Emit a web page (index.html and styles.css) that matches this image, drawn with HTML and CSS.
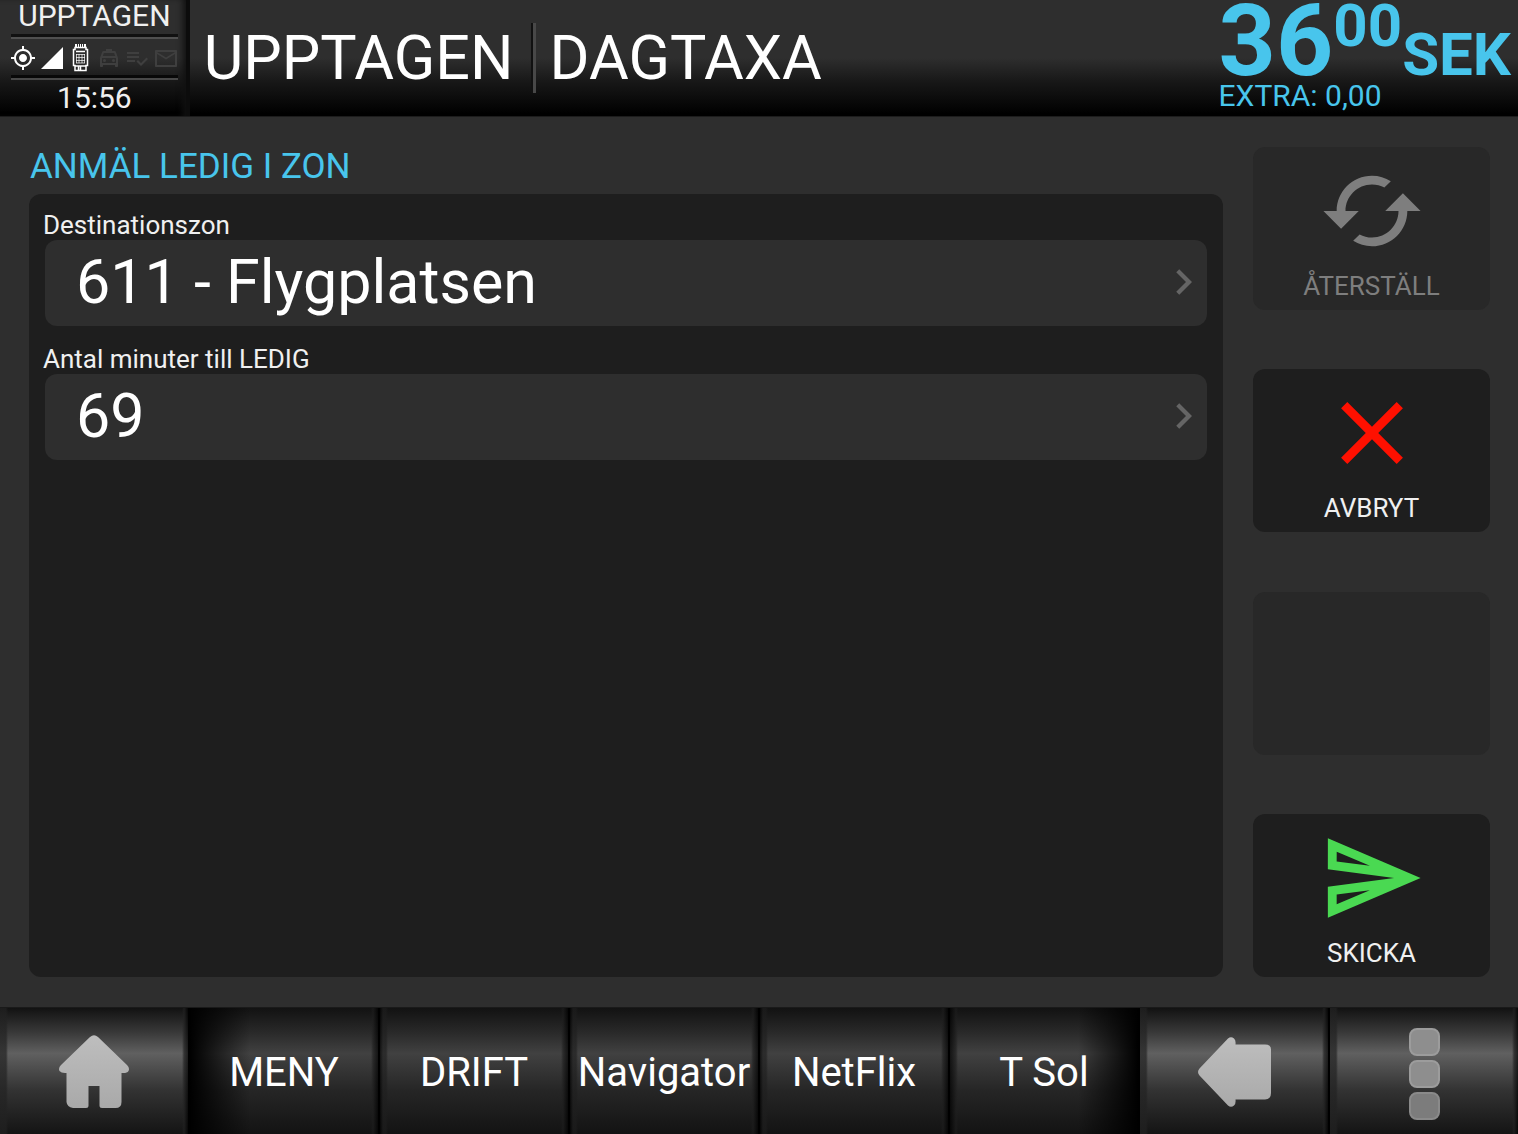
FILE: index.html
```html
<!DOCTYPE html>
<html lang="sv">
<head>
<meta charset="utf-8">
<title>Anmäl ledig i zon</title>
<link rel="stylesheet" href="styles.css">
</head>

<body>
<header class="top">
	<div class="status">
		<div class="status-text">UPPTAGEN</div>
		<div class="status-icons">
			<svg viewBox="0 0 24 24"><path d="M12 8c-2.21 0-4 1.79-4 4s1.79 4 4 4 4-1.79 4-4-1.79-4-4-4zm8.94 3c-.46-4.17-3.77-7.48-7.94-7.94V0h-2v3.06C6.83 3.52 3.52 6.83 3.06 11H0v2h3.06c.46 4.17 3.77 7.48 7.94 7.94V24h2v-3.06c4.17-.46 7.48-3.77 7.94-7.94H24v-2h-3.06zM12 19c-3.87 0-7-3.13-7-7s3.13-7 7-7 7 3.13 7 7-3.13 7-7 7z"/></svg>
			<svg viewBox="0 0 24 24"><path d="M1 23h22V1z"/></svg>
			<svg class="meter" viewBox="0 0 24 28"><path d="M7 0h2v3H7zM10 0h1v3h-1zM12 0h1v3h-1zM14 0h1v3h-1zM16 0h2v3h-2z"/><path class="line" d="M7 3.500h11v2h1.500v16H18v5H7v-5H5.500v-16H7zM8 7.500h9M7 22h11M10.500 22v4M12.500 22v4"/><path class="thin" d="M8 10.500h9M8 13.500h9M8 16.500h9M8 19h9M8.500 10v9M11 10v9M14 10v9M16.500 10v9"/></svg>
			<svg class="off" viewBox="0 0 24 24"><path d="M18.920 6.010C18.720 5.420 18.160 5 17.500 5H15V3H9v2H6.500c-.66 0-1.210.42-1.420 1.010L3 12v8c0 .55.45 1 1 1h1c.55 0 1-.45 1-1v-1h12v1c0 .55.45 1 1 1h1c.55 0 1-.45 1-1v-8l-2.080-5.990zM6.850 7h10.290l1.040 3H5.810l1.040-3zM19 17H5v-5h14v5z"/><circle cx="7.500" cy="14.500" r="1.500"/><circle cx="16.500" cy="14.500" r="1.500"/></svg>
			<svg class="off" viewBox="0 0 24 24"><path d="M14 10H2v2h12v-2zm0-4H2v2h12V6zM2 16h8v-2H2v2zm19.500-4.500L23 13l-6.990 7-4.510-4.500L13 14l3.010 3 5.490-5.500z"/></svg>
			<svg class="off" viewBox="0 0 24 24"><path d="M22 4H2c-.6 0-1 .4-1 1v15c0 .6.4 1 1 1h20c.6 0 1-.4 1-1V5c0-.6-.4-1-1-1zm-1 15H3V8l9 5.500L21 8v11zm-9-7.500L3 6h18l-9 5.500z"/></svg>
		</div>
		<div class="status-text">15:56</div>
	</div>
	<div class="mode">
		<span>UPPTAGEN</span>
		<span>DAGTAXA</span>
	</div>
	<div class="fare">
		<div class="price"><b class="whole">36</b><b class="cents">00</b><b class="currency">SEK</b></div>
		<div class="extra">EXTRA: 0,00</div>
	</div>
</header>

<main class="content">
	<section class="form">
		<h1>ANMÄL LEDIG I ZON</h1>
		<div class="panel">
			<div class="row">
				<label for="zone">Destinationszon</label>
				<button type="button" class="field" id="zone">611 - Flygplatsen
					<svg viewBox="8 6 8 12"><path d="M10 6L8.590 7.410 13.170 12l-4.580 4.590L10 18l6-6z"/></svg>
				</button>
			</div>
			<div class="row">
				<label for="minutes">Antal minuter till LEDIG</label>
				<button type="button" class="field" id="minutes">69
					<svg viewBox="8 6 8 12"><path d="M10 6L8.590 7.410 13.170 12l-4.580 4.590L10 18l6-6z"/></svg>
				</button>
			</div>
		</div>
	</section>
	<aside class="actions">
		<button type="button" class="action reset" disabled>
			<svg viewBox="0 0 24 24"><path d="M19 8l-4 4h3c0 3.310-2.690 6-6 6-1.010 0-1.970-.25-2.800-.7l-1.460 1.460C8.970 19.540 10.430 20 12 20c4.420 0 8-3.580 8-8h3l-4-4zM6 12c0-3.310 2.690-6 6-6 1.010 0 1.970.25 2.800.7l1.460-1.460C15.030 4.460 13.570 4 12 4c-4.420 0-8 3.580-8 8H1l4 4 4-4H6z"/></svg>
			ÅTERSTÄLL
		</button>
		<button type="button" class="action cancel">
			<svg viewBox="0 0 24 24"><path d="M19 6.410L17.590 5 12 10.590 6.410 5 5 6.410 10.590 12 5 17.590 6.410 19 12 13.410 17.590 19 19 17.590 13.410 12z"/></svg>
			AVBRYT
		</button>
		<div class="action empty"></div>
		<button type="button" class="action send">
			<svg viewBox="0 0 24 24"><path d="M4.010 6.030l7.510 3.220-7.520-1 .01-2.220m7.500 8.720L4 17.970v-2.220l7.510-1M2.010 3L2 10l15 2-15 2 .01 7L23 12 2.010 3z"/></svg>
			SKICKA
		</button>
	</aside>
</main>

<nav class="bottom">
	<button type="button" class="key light" aria-label="Hem">
		<svg width="70" height="74" viewBox="0 0 70 74">
			<defs><linearGradient id="grey" x1="0" y1="0" x2="0" y2="1"><stop offset="0" stop-color="#bebebe"/><stop offset="1" stop-color="#a9a9a9"/></linearGradient></defs>
			<path fill="url(#grey)" d="M31 2q4-3.500 8 0L68 30q3 3 1.500 6-1.500 2.500-7 2V67q0 6-6 6H43q-2.500 0-2.500-2.500V51h-11v19.500q0 2.500-2.500 2.500H14q-6-1-6.500-6V38q-5 .5-7-2-1.500-3 1.500-6z"/>
		</svg>
	</button>
	<button type="button" class="key first">MENY</button>
	<button type="button" class="key">DRIFT</button>
	<button type="button" class="key">Navigator</button>
	<button type="button" class="key">NetFlix</button>
	<button type="button" class="key last">T Sol</button>
	<button type="button" class="key light" aria-label="Tillbaka">
		<svg width="73" height="70" viewBox="0 0 73 70"><path fill="url(#grey)" d="M1.500 31.500L30 1.500q3-2.500 6 0 2 1.500 1.500 6H67q6 0 6 5V56q0 6-6 6.500H37.500q.5 4.500-1.500 6-3 2.500-6 0L1.500 38.500q-3-3.500 0-7z"/></svg>
	</button>
	<button type="button" class="key light" aria-label="Mer">
		<span class="dots"><i></i><i></i><i></i></span>
	</button>
</nav>
</body>
</html>
```

FILE: styles.css
```css
*{box-sizing:border-box;}
body{margin:0; min-height:100vh; display:flex; flex-direction:column; background:#2e2e2e; color:#fff; font-family:Roboto, "Liberation Sans", sans-serif;}
button{margin:0; border:0; font-family:inherit; color:inherit; cursor:pointer;}
svg{display:block; fill:currentColor; flex:none;}

/* top bar */
.top{display:flex; height:117px; background:linear-gradient(#2e2e2e 0, #2e2e2e 50%, #181818 70%, #000 98%); border-bottom:1px solid #1c1c1c;}
.status{width:12.5%; padding:0 8px 0 11px; border-right:4px solid #0c0c0c; box-shadow:inset -6px 0 6px -3px #111; display:flex; flex-direction:column; text-align:center;}
.status-text{font-size:30px; line-height:32px; color:#f0f0f0;}
.status-icons{display:flex; justify-content:space-between; align-items:center; height:46px; margin:2px 0; border-top:3px solid #111; border-bottom:2px solid #484848; background:linear-gradient(#505050, #505050) 0 0/100% 2px no-repeat, linear-gradient(#080808, #080808) 0 100%/100% 3px no-repeat;}
.status-icons svg{width:24px; height:24px;}
.status-icons .meter{height:28px;}
.status-icons .off{color:#3f3f3f;}
.line,.thin{fill:none; stroke:currentColor; stroke-width:1.5;}
.thin{stroke-width:1; opacity:.7;}
.mode{flex:1; display:flex; align-items:center; font-size:61px; line-height:70px; padding-left:14px;}
.mode span+span{margin-left:19px; padding-left:14px; border-left:3px solid #484848; box-shadow:-2px 0 0 #111;}
.fare{color:#48c5ec; padding-right:7px;}
.price{display:flex; height:81px;}
.whole{font-size:100px; line-height:82px;}
.cents{font-size:60px; line-height:52px;}
.currency{font-size:60px; line-height:52px; align-self:flex-end;}
.extra{font-size:30px; line-height:30px;}

/* form */
.content{flex:1; display:flex; gap:30px; padding:30px 28px 30px 29px;}
.form{flex:1; display:flex; flex-direction:column;}
.form h1{margin:0 0 7px; padding-left:1px; font-size:35px; line-height:40px; font-weight:400; color:#48c5ec;}
.panel{flex:1; display:flex; flex-direction:column; gap:18px; padding:16px; border-radius:12px; background:#1e1e1e;}
.row{display:flex; flex-direction:column;}
.row label{margin-left:-2px; font-size:26px; line-height:30px; color:#f0f0f0;}
.field{display:flex; align-items:center; justify-content:space-between; height:86px; padding:0 15px 2px 31px; border-radius:12px; background:#2e2e2e; font-size:61px; text-align:left;}
.field svg{width:17px; height:26px; color:#656565;}

/* side buttons */
.actions{display:flex; flex-direction:column; justify-content:space-between; width:237px;}
.action{display:flex; flex-direction:column; align-items:center; gap:7px; height:163px; padding:11px 0 9px; border-radius:12px; background:#1e1e1e; font-size:26px; line-height:30px; color:#f0f0f0;}
.action svg{width:106px; height:106px;}
.reset{background:#282828; color:#7e7e7e;}
.empty{background:#282828;}
.cancel svg{color:#ff1000;}
.send svg{color:#4ad952;}

/* bottom keys */
.bottom{display:grid; grid-template-columns:repeat(8, 1fr); gap:2px; height:127px; background:#000; border-top:1px solid #1a1a1a;}
.key{display:flex; align-items:center; justify-content:center; padding:2px 0 0; font-size:40px; white-space:nowrap; background:linear-gradient(90deg, #000000b0 0, #1e1e1e99 3px, #1e1e1e99 6px, #1e1e1e00 8px, #1e1e1e00 calc(100% - 7px), #1e1e1e99 calc(100% - 5px), #000000b0 100%), linear-gradient(#121212 0, #2a2a2a 20%, #414141 36%, #262626 65%, #131313 100%);}
.light{background:linear-gradient(90deg, #222222b0 0, #222222b0 6px, #22222200 8px, #22222200 calc(100% - 6px), #222222b0 calc(100% - 4px), #000000b0 100%), linear-gradient(#121212 0, #3a3a3a 20%, #606060 36%, #333 65%, #141414 100%);}
.first{background:linear-gradient(90deg, #000 0, #0000 60px, #1e1e1e00 calc(100% - 7px), #1e1e1e99 calc(100% - 5px), #000000b0 100%), linear-gradient(#121212 0, #2a2a2a 20%, #414141 36%, #262626 65%, #131313 100%);}
.last{background:linear-gradient(270deg, #000 0, #0000 60px, #1e1e1e00 calc(100% - 8px), #1e1e1e99 calc(100% - 6px), #000000b0 100%), linear-gradient(#121212 0, #2a2a2a 20%, #414141 36%, #262626 65%, #131313 100%);}
.dots{display:flex; flex-direction:column; gap:4px; padding-top:3px;}
.dots i{width:31px; height:28px; border:2px solid #9c9c9c; border-radius:8px; background:#8e8e8e;}
.dots i:last-child{border-color:#8a8a8a; background:#7c7c7c;}
```
